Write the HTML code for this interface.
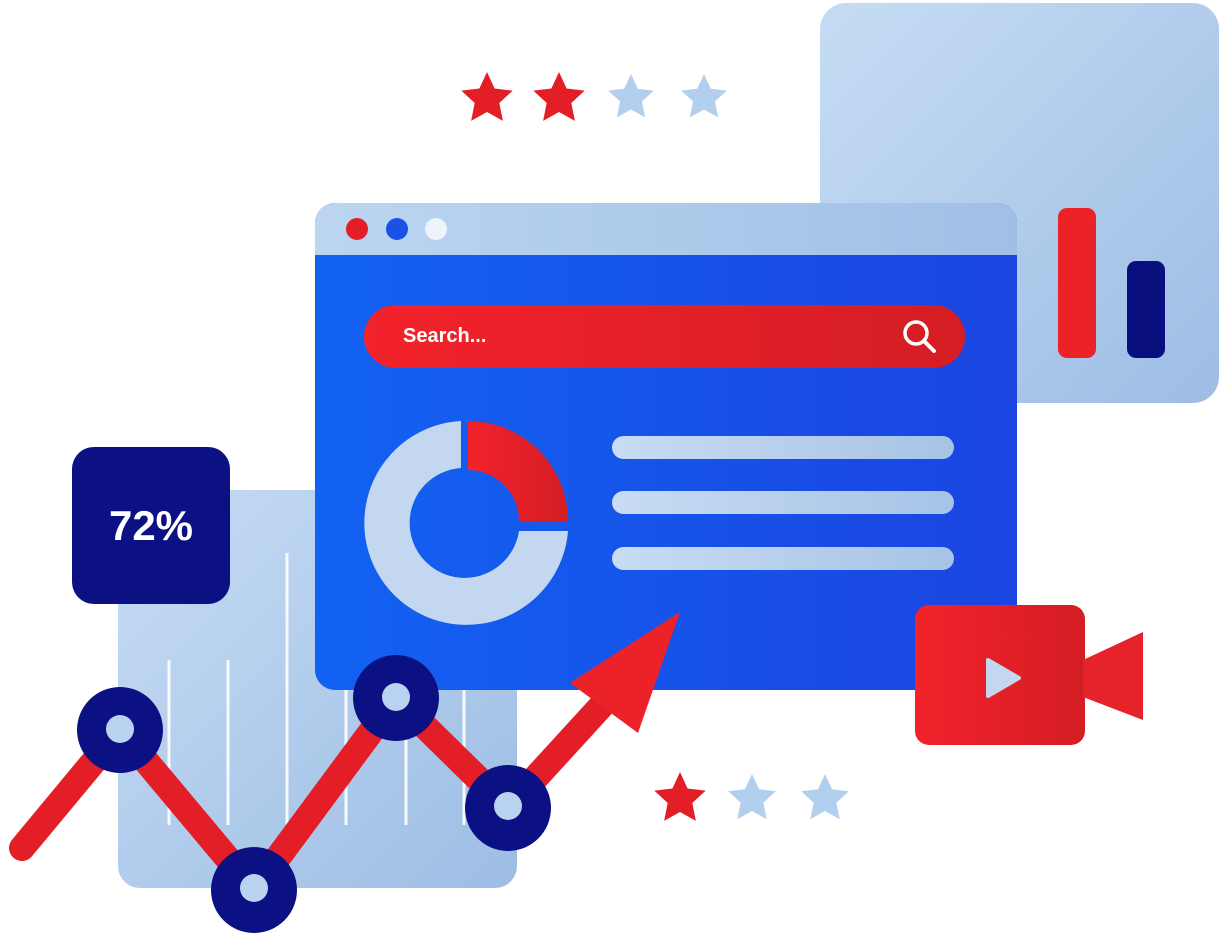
<!DOCTYPE html>
<html><head><meta charset="utf-8"><style>html,body{margin:0;padding:0;background:#fff;width:1219px;height:935px;overflow:hidden}</style></head>
<body>
<svg width="1219" height="935" viewBox="0 0 1219 935" xmlns="http://www.w3.org/2000/svg">
<defs>
<linearGradient id="lb" x1="0" y1="0" x2="1" y2="1"><stop offset="0" stop-color="#c6dcf4"/><stop offset="1" stop-color="#9dbde4"/></linearGradient>
<linearGradient id="hdr" x1="0" y1="0" x2="1" y2="0"><stop offset="0" stop-color="#bcd5f1"/><stop offset="1" stop-color="#9fbfe5"/></linearGradient>
<linearGradient id="blue" x1="0" y1="0" x2="1" y2="0"><stop offset="0" stop-color="#1262f2"/><stop offset="1" stop-color="#1b44e0"/></linearGradient>
<linearGradient id="red" x1="0" y1="0" x2="1" y2="0"><stop offset="0" stop-color="#f3222b"/><stop offset="1" stop-color="#d41d24"/></linearGradient>
<linearGradient id="bar" x1="0" y1="0" x2="1" y2="0"><stop offset="0" stop-color="#c8dcf3"/><stop offset="1" stop-color="#a6c3e6"/></linearGradient>
<polygon id="st" points="0,-1 .282,-.388 .951,-.309 .456,.148 .588,.809 0,.48 -.588,.809 -.456,.148 -.951,-.309 -.282,-.388"/>
</defs>
<rect x="820" y="3" width="399" height="400" rx="26" fill="url(#lb)"/>
<rect x="1058" y="208" width="38" height="150" rx="9" fill="#ec2229"/>
<rect x="1127" y="261" width="38" height="97" rx="9" fill="#0a0f80"/>
<use href="#st" transform="translate(487,99) scale(27)" fill="#e41e26"/>
<use href="#st" transform="translate(559,99) scale(27)" fill="#e41e26"/>
<use href="#st" transform="translate(631,98) scale(24)" fill="#b3cfee"/>
<use href="#st" transform="translate(704,98) scale(24)" fill="#b3cfee"/>
<use href="#st" transform="translate(680,799) scale(27)" fill="#e41e26"/>
<use href="#st" transform="translate(752,799) scale(25)" fill="#b3cfee"/>
<use href="#st" transform="translate(825,799) scale(25)" fill="#b3cfee"/>
<rect x="118" y="490" width="399" height="398" rx="22" fill="url(#lb)"/>
<g stroke="#ffffff" stroke-width="3" opacity=".9">
<line x1="169" y1="660" x2="169" y2="825"/><line x1="228" y1="660" x2="228" y2="825"/><line x1="287" y1="553" x2="287" y2="825"/>
<line x1="346" y1="660" x2="346" y2="825"/><line x1="406" y1="660" x2="406" y2="825"/><line x1="464" y1="660" x2="464" y2="825"/>
</g>
<rect x="315" y="203" width="702" height="487" rx="20" fill="url(#blue)"/>
<path d="M335 203 H997 A20 20 0 0 1 1017 223 V255 H315 V223 A20 20 0 0 1 335 203Z" fill="url(#hdr)"/>
<circle cx="357" cy="229" r="11" fill="#e41e26"/>
<circle cx="397" cy="229" r="11" fill="#1a52e8"/>
<circle cx="436" cy="229" r="11" fill="#eef4fb"/>
<rect x="364" y="305" width="601" height="63" rx="31.5" fill="url(#red)"/>
<text x="403" y="342" font-family="Liberation Sans, sans-serif" font-weight="bold" font-size="20" fill="#fff">Search...</text>
<circle cx="916" cy="333" r="11" fill="none" stroke="#fff" stroke-width="3.5"/>
<line x1="924" y1="341" x2="934" y2="351" stroke="#fff" stroke-width="4" stroke-linecap="round"/>
<path d="M461 421 A102 102 0 1 0 568 531 H519 A55 55 0 1 1 461 468 Z" fill="#c3d8f0"/>
<path d="M468 421 A100 100 0 0 1 568 521 H519 A51 51 0 0 0 468 470 Z" fill="url(#red)"/>
<rect x="612" y="436" width="342" height="23" rx="11.5" fill="url(#bar)"/>
<rect x="612" y="491" width="342" height="23" rx="11.5" fill="url(#bar)"/>
<rect x="612" y="547" width="342" height="23" rx="11.5" fill="url(#bar)"/>
<rect x="72" y="447" width="158" height="157" rx="22" fill="#0b1082"/>
<text x="151" y="540" text-anchor="middle" font-family="Liberation Sans, sans-serif" font-weight="bold" font-size="42" fill="#fff">72%</text>
<polyline points="22,848 120,730 254,890 396,698 508,808 625,680" fill="none" stroke="#e41e26" stroke-width="26" stroke-linecap="round" stroke-linejoin="round"/>
<polygon points="570,683 680,612 638,733" fill="#ec2229"/>
<g fill="#0b1082">
<circle cx="120" cy="730" r="43"/><circle cx="254" cy="890" r="43"/><circle cx="396" cy="698" r="43"/><circle cx="508" cy="808" r="43"/>
</g>
<g fill="#b9d2ef">
<circle cx="120" cy="729" r="14"/><circle cx="254" cy="888" r="14"/><circle cx="396" cy="697" r="14"/><circle cx="508" cy="806" r="14"/>
</g>
<rect x="915" y="605" width="170" height="140" rx="14" fill="url(#red)"/>
<polygon points="1083,660 1143,632 1143,720 1083,697" fill="#e6222a"/>
<polygon points="988,660 1019,678 988,696" fill="#c3d8f0" stroke="#c3d8f0" stroke-width="4" stroke-linejoin="round"/>
</svg>
</body></html>
